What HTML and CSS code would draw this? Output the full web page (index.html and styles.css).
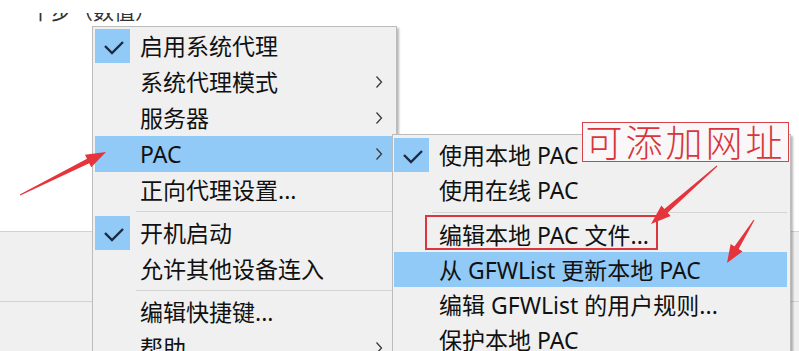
FILE: index.html
```html
<!DOCTYPE html>
<html lang="zh-CN">
<head>
  <meta charset="UTF-8">
  <meta name="viewport" content="width=device-width, initial-scale=1.0">
  <title>PAC 菜单</title>
  <link rel="stylesheet" href="styles.css">
</head>
<body>

  <!-- ───────── page underneath ───────── -->
  <div class="page">
    <div class="field-clip"><span>丨步（数值）</span></div>
    <div class="blank"></div>
    <div class="panel">
      <div class="panel-row"></div>
      <div class="panel-row"></div>
    </div>
  </div>

  <!-- ───────── main context menu ───────── -->
  <ul class="menu menu-main">
    <li class="item checked">
      <span class="check"><svg viewBox="0 0 35 34"><polyline points="10,17 17,24 28,13"/></svg></span>
      <span class="label">启用系统代理</span><span class="arrow"></span>
    </li>
    <li class="item">
      <span class="check"></span><span class="label">系统代理模式</span>
      <span class="arrow"><svg viewBox="0 0 8 14"><polyline points="1.5,1.5 6.5,7 1.5,12.5"/></svg></span>
    </li>
    <li class="item">
      <span class="check"></span><span class="label">服务器</span>
      <span class="arrow"><svg viewBox="0 0 8 14"><polyline points="1.5,1.5 6.5,7 1.5,12.5"/></svg></span>
    </li>
    <li class="item active">
      <span class="check"></span><span class="label">PAC</span>
      <span class="arrow"><svg viewBox="0 0 8 14"><polyline points="1.5,1.5 6.5,7 1.5,12.5"/></svg></span>
    </li>
    <li class="item">
      <span class="check"></span><span class="label">正向代理设置...</span><span class="arrow"></span>
    </li>
    <li class="sep"></li>
    <li class="item checked">
      <span class="check"><svg viewBox="0 0 35 34"><polyline points="10,17 17,24 28,13"/></svg></span>
      <span class="label">开机启动</span><span class="arrow"></span>
    </li>
    <li class="item">
      <span class="check"></span><span class="label">允许其他设备连入</span><span class="arrow"></span>
    </li>
    <li class="sep"></li>
    <li class="item">
      <span class="check"></span><span class="label">编辑快捷键...</span><span class="arrow"></span>
    </li>
    <li class="item">
      <span class="check"></span><span class="label">帮助</span>
      <span class="arrow"><svg viewBox="0 0 8 14"><polyline points="1.5,1.5 6.5,7 1.5,12.5"/></svg></span>
    </li>
  </ul>

  <!-- ───────── PAC submenu ───────── -->
  <ul class="menu menu-sub">
    <li class="item checked">
      <span class="check"><svg viewBox="0 0 35 34"><polyline points="10,17 17,24 28,13"/></svg></span>
      <span class="label">使用本地 PAC</span><span class="arrow"></span>
    </li>
    <li class="item">
      <span class="check"></span><span class="label">使用在线 PAC</span><span class="arrow"></span>
    </li>
    <li class="sep"></li>
    <li class="item">
      <span class="check"></span><span class="label">编辑本地 PAC 文件...</span><span class="arrow"></span>
    </li>
    <li class="item active">
      <span class="check"></span><span class="label">从 GFWList 更新本地 PAC</span><span class="arrow"></span>
    </li>
    <li class="item">
      <span class="check"></span><span class="label">编辑 GFWList 的用户规则...</span><span class="arrow"></span>
    </li>
    <li class="item">
      <span class="check"></span><span class="label">保护本地 PAC</span><span class="arrow"></span>
    </li>
  </ul>

  <!-- ───────── red annotations ───────── -->
  <div class="note-label">可添加网址</div>
  <div class="note-box"></div>
  <svg class="note-arrows" viewBox="0 0 799 351">
    <polygon points="20.22,195.45 89.23,163.18 91.24,167.20 106,152 84.98,154.68 86.99,158.70 19.78,194.55"/>
    <polygon points="717.33,166.38 667.67,212.68 670.64,216.06 651,224 661.40,205.54 664.37,208.92 716.67,165.62"/>
    <polygon points="754.42,220.27 738.69,249.08 742.50,251.47 727,263 730.64,244.03 734.45,246.42 753.58,219.73"/>
  </svg>

</body>
</html>
```

FILE: styles.css
```css
/* Basic reset */
html, body {
    margin: 0;
    padding: 0;
    width: 799px;
    height: 351px;
    overflow: hidden;
    background-color: #ffffff;
    font-family: "Noto Sans", "Noto Sans CJK SC", sans-serif;
    color: #111;
}

/* Page under the menus */
.page {
    display: flex;
    flex-direction: column;
    height: 100%;
}

.field-clip {
    flex-shrink: 0;
    margin-top: 13px;
    height: 9px;
    overflow: hidden;
    padding-left: 30px;
}

.field-clip span {
    display: block;
    margin-top: -13px;
    font-size: 21px;
    line-height: 22px;
    color: #333;
}

.blank {
    flex-shrink: 0;
    height: 209px;
}

.panel {
    flex: 1;
    min-height: 0;
    overflow: hidden;
    background-color: #f0f0f0;
}

.panel-row {
    height: 69px;
    border-top: 1px solid #d2d2d2;
}

/* Context menus */
.menu {
    position: absolute;
    margin: 0;
    list-style: none;
    box-sizing: border-box;
    background-color: #f0f0f0;
    border: 1px solid #bcbcbc;
    box-shadow: 2px 2px 2px rgba(0, 0, 0, 0.28);
    font-size: 23px;
}

.menu-main {
    left: 92px;
    top: 26px;
    width: 305px;
    height: 360px;
    padding: 1px 3px 0 2px;
}

.menu-sub {
    left: 392px;
    top: 134px;
    width: 399px;
    height: 250px;
    padding: 2px 3px 0 1px;
}

.item {
    display: grid;
    grid-template-columns: 35px 1fr 26px;
    column-gap: 10px;
    align-items: center;
    height: 36px;
    white-space: nowrap;
}

.menu-sub .item {
    height: 35px;
}

.item.active {
    background-color: #91c9f7;
}

.check {
    height: 34px;
    display: flex;
}

.check svg {
    width: 35px;
    height: 34px;
}

.check polyline {
    fill: none;
    stroke: #1b2b42;
    stroke-width: 2.4;
}

.item.checked .check {
    background-color: #91c9f7;
}

.label {
    line-height: 30px;
}

.arrow {
    display: flex;
    align-items: center;
}

.arrow svg {
    width: 8px;
    height: 14px;
    margin-left: 8px;
}

.arrow polyline {
    fill: none;
    stroke: #3a3a3a;
    stroke-width: 1.3;
}

/* Separators */
.sep {
    height: 7px;
    display: flex;
    align-items: center;
    padding-left: 41px;
}

.sep::before {
    content: "";
    flex: 1;
    border-top: 1px solid #d4d4d4;
}

.menu-sub .sep {
    height: 10px;
    padding-left: 38px;
}

/* Red annotations */
.note-label {
    position: absolute;
    left: 582px;
    top: 122px;
    width: 207px;
    height: 40px;
    box-sizing: border-box;
    border: 1.5px solid #d9414a;
    background-color: #f9f7f7;
    color: #d8363c;
    font-family: "Noto Sans CJK SC", sans-serif;
    font-weight: 300;
    font-size: 37px;
    line-height: 36px;
    letter-spacing: 3px;
    text-align: center;
}

.note-box {
    position: absolute;
    left: 425px;
    top: 215px;
    width: 233px;
    height: 35px;
    box-sizing: border-box;
    border: 2px solid #d9363e;
}

.note-arrows {
    position: absolute;
    left: 0;
    top: 0;
    width: 799px;
    height: 351px;
    pointer-events: none;
}

.note-arrows polygon {
    fill: #e5343b;
}
```
